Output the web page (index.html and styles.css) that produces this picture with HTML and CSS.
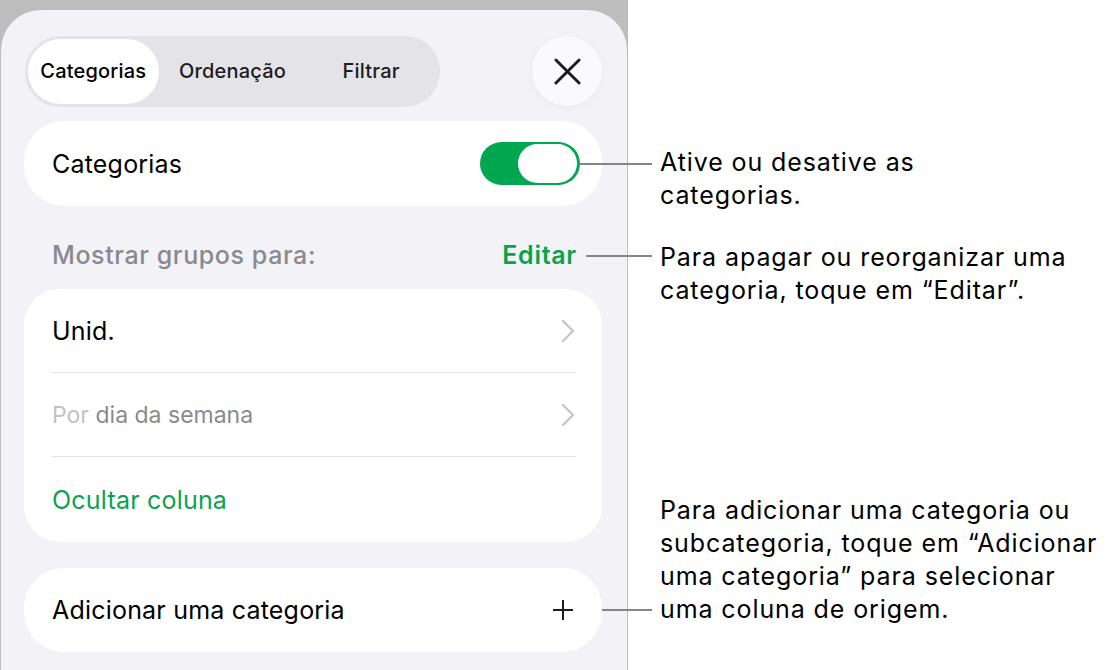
FILE: index.html
```html
<!DOCTYPE html>
<html lang="pt">
<head>
<meta charset="utf-8">
<link rel="stylesheet" href="styles.css">
</head>
<body>
<div class="page">
  <div class="frame">
    <div class="panel">
      <div class="header">
        <div class="segmented">
          <div class="seg seg-active">Categorias</div>
          <div class="seg seg-shift">Ordenação</div>
          <div class="seg seg-shift">Filtrar</div>
        </div>
        <div class="close">
          <svg width="28" height="28" viewBox="0 0 28 28"><path d="M2 2 L26 26 M26 2 L2 26" stroke="#1c1c1e" stroke-width="3" stroke-linecap="round" fill="none"/></svg>
        </div>
      </div>
      <div class="card card-single">
        <span class="label">Categorias</span>
        <div class="toggle"><div class="knob"></div></div>
      </div>
      <div class="section-head">
        <span class="section-title">Mostrar grupos para:</span>
        <span class="edit">Editar</span>
      </div>
      <div class="card card-list">
        <div class="row">
          <span class="label">Unid.</span>
          <svg class="chev" width="14" height="24" viewBox="0 0 14 24"><path d="M2 2 L12 12 L2 22" stroke="#c4c4c7" stroke-width="2.2" stroke-linecap="round" stroke-linejoin="round" fill="none"/></svg>
        </div>
        <div class="row">
          <span class="label-sub"><span class="faint">Por</span> dia da semana</span>
          <svg class="chev" width="14" height="24" viewBox="0 0 14 24"><path d="M2 2 L12 12 L2 22" stroke="#c4c4c7" stroke-width="2.2" stroke-linecap="round" stroke-linejoin="round" fill="none"/></svg>
        </div>
        <div class="row row-last">
          <span class="label green">Ocultar coluna</span>
        </div>
      </div>
      <div class="card card-single card-add">
        <span class="label">Adicionar uma categoria</span>
        <svg class="plus" width="22" height="22" viewBox="0 0 22 22"><path d="M11 1 V21 M1 11 H21" stroke="#1c1c1e" stroke-width="2" fill="none"/></svg>
      </div>
    </div>
  </div>
  <div class="notes">
    <p class="note note1">Ative ou desative as<br>categorias.</p>
    <p class="note note2">Para apagar ou reorganizar uma<br>categoria, toque em “Editar”.</p>
    <p class="note note3">Para adicionar uma categoria ou<br>subcategoria, toque em “Adicionar<br>uma categoria” para selecionar<br>uma coluna de origem.</p>
  </div>
  <div class="leader leader1"></div>
  <div class="leader leader2"></div>
  <div class="leader leader3"></div>
</div>
</body>
</html>
```
FILE: styles.css
```css
* { box-sizing: border-box; }
html, body { margin: 0; padding: 0; background: #ffffff; }
body {
  font-family: Inter, "Liberation Sans", sans-serif;
  color: #000;
}
.page {
  position: relative;
  display: flex;
  width: 1107px;
  height: 670px;
  overflow: hidden;
}
.frame {
  width: 628px;
  height: 670px;
  flex: none;
  background: #bdbdbd;
  padding: 10px 1px 0 1px;
}
.panel {
  height: 100%;
  background: #f2f2f7;
  border-radius: 40px 40px 0 0;
  padding: 25px 25px 0 23px;
}
.header {
  display: flex;
  align-items: center;
  justify-content: space-between;
  height: 72px;
}
.segmented {
  width: 416px;
  height: 72px;
  border-radius: 36px;
  background: #e3e3e8;
  display: flex;
  align-items: center;
  padding: 0 4px;
  box-shadow: inset 1px 1px 0 rgba(255,255,255,0.6);
}
.seg {
  width: 140px;
  height: 65px;
  display: flex;
  align-items: center;
  justify-content: center;
  font-size: 20px;
  font-weight: 500;
  letter-spacing: 0.2px;
  color: #1c1c1e;
}
.seg-shift { padding-left: 9px; }
.seg-active {
  width: 132px;
  background: #ffffff;
  border-radius: 33px;
  color: #000;
}
.close {
  width: 70px;
  height: 70px;
  border-radius: 50%;
  background: #fafafc;
  display: flex;
  align-items: center;
  justify-content: center;
  box-shadow: 0 2px 10px rgba(0,0,0,0.04);
}
.close svg { width: 27px; height: 27px; }
.card {
  background: #ffffff;
  width: 578px;
}
.card-single {
  margin-top: 14px;
  height: 85px;
  border-radius: 40px;
  display: flex;
  align-items: center;
  justify-content: space-between;
  padding: 0 22px 0 28px;
}
.label {
  font-size: 25px;
  letter-spacing: 0.2px;
  color: #000;
}
.green { color: #0ba24e; }
.toggle {
  width: 100px;
  height: 43px;
  border-radius: 22px;
  background: #00a650;
  padding: 2px 3px;
  display: flex;
  justify-content: flex-end;
}
.knob {
  width: 59px;
  height: 39px;
  border-radius: 20px;
  background: #ffffff;
}
.section-head {
  height: 83px;
  display: flex;
  align-items: center;
  justify-content: space-between;
  padding: 0 25px 0 28px;
  padding-top: 14px;
}
.section-title {
  font-size: 25px;
  font-weight: 500;
  letter-spacing: 0.6px;
  color: #8a8a8e;
}
.edit {
  font-size: 25px;
  font-weight: 600;
  letter-spacing: 0.7px;
  color: #0ba24e;
}
.card-list {
  height: 253px;
  border-radius: 36px;
  padding: 0 26px 0 28px;
  display: flex;
  flex-direction: column;
}
.row {
  height: 84px;
  display: flex;
  align-items: center;
  justify-content: space-between;
  border-bottom: 1px solid #e2e2e6;
  padding-right: 1px;
}
.row-last { border-bottom: none; height: 85px; }
.label-sub {
  font-size: 23px;
  letter-spacing: 0px;
  color: #8a8a8e;
}
.faint { color: #c2c2c6; }
.chev { display: block; }
.card-add {
  margin-top: 26px;
  height: 84px;
  padding-right: 28px;
}
.plus { display: block; }
.notes {
  padding-left: 32px;
  padding-top: 146px;
}
.note {
  margin: 0;
  font-size: 25px;
  line-height: 33px;
  letter-spacing: 0.9px;
  color: #000;
  white-space: nowrap;
}
.note2 { margin-top: 29px; }
.note3 { margin-top: 187px; }
.leader {
  position: absolute;
  height: 2px;
  background: #858585;
}
.leader1 { left: 579px; width: 73px; top: 163px; }
.leader2 { left: 586px; width: 66px; top: 255px; }
.leader3 { left: 602px; width: 50px; top: 609px; }
```
